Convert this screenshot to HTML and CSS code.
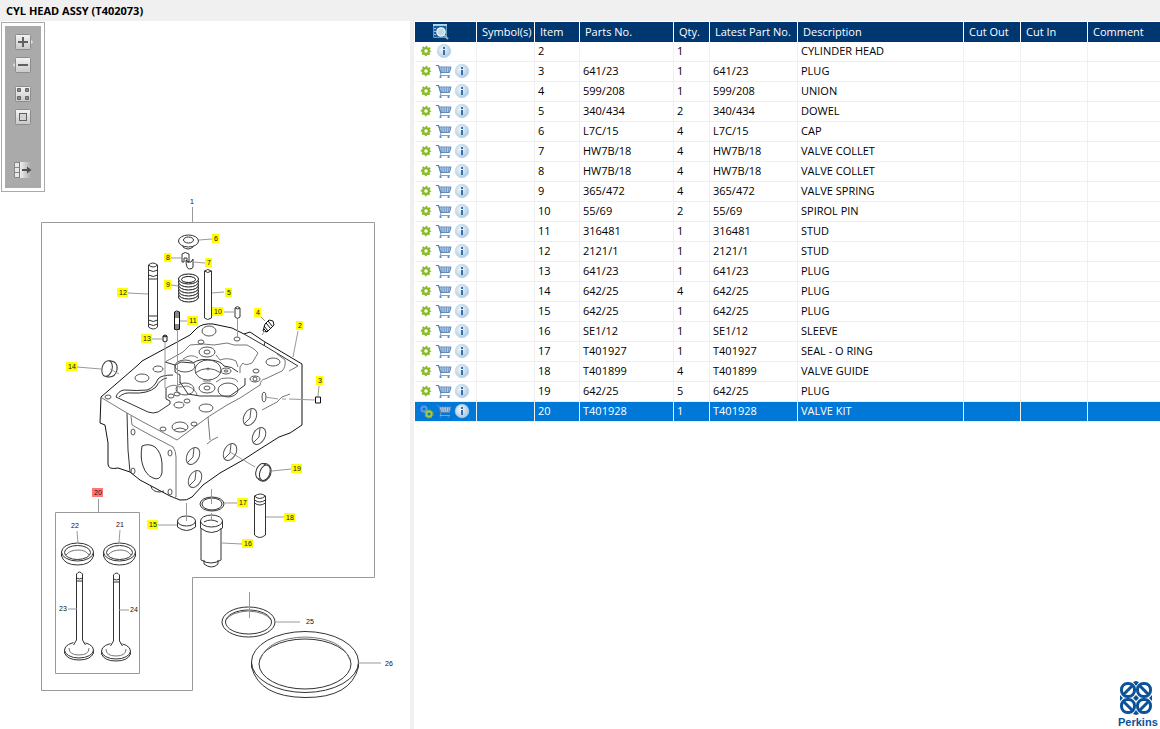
FILE: index.html
```
<!DOCTYPE html>
<html lang="en">

<head>
    <meta charset="utf-8">
    <meta name="viewport" content="width=device-width, initial-scale=1.0">
    <title>CYL HEAD ASSY (T402073)</title>
    <link rel="stylesheet" href="styles.css">
</head>

<body>
    <!-- shared icons -->
    <svg class="sprite" aria-hidden="true">
        <defs>
            <linearGradient id="metal" x1="0" y1="0" x2="0" y2="1">
                <stop offset="0" stop-color="#f4f4f4"/>
                <stop offset="1" stop-color="#c8c8c8"/>
            </linearGradient>
            <linearGradient id="fade">
                <stop offset="0" stop-color="#eee"/>
                <stop offset="1" stop-color="#aaa"/>
            </linearGradient>
            <radialGradient id="glass" cx=".4" cy=".4" r=".6">
                <stop offset="0" stop-color="#f2f8fc"/>
                <stop offset="1" stop-color="#accbe4"/>
            </radialGradient>
        </defs>
        <symbol id="gear" viewBox="0 0 16 16">
            <circle cx="8" cy="8" r="2.9" fill="none" stroke="#8abb2a" stroke-width="2.4"/>
            <circle cx="8" cy="8" r="4.4" fill="none" stroke="#8abb2a" stroke-width="1.6" stroke-dasharray="1.9 1.55" stroke-dashoffset=".95"/>
        </symbol>
        <symbol id="gears" viewBox="0 0 16 16">
            <circle cx="6" cy="6" r="2.6" fill="none" stroke="#5a9cf0" stroke-width="2"/>
            <circle cx="6" cy="6" r="4.1" fill="none" stroke="#3f6fd8" stroke-width="1.4" stroke-dasharray="1.7 1.52"/>
            <circle cx="11" cy="11" r="2.6" fill="none" stroke="#a8c83a" stroke-width="2.2"/>
            <circle cx="11" cy="11" r="4" fill="none" stroke="#8fae3a" stroke-width="1.2" stroke-dasharray="1.6 1.54"/>
        </symbol>
        <symbol id="cart" viewBox="0 0 16 16">
            <path d="M0 2.5h2.5l2.5 8" fill="none" stroke="#4f7fb8" stroke-width="1.2"/>
            <path d="M3 4h12l-1.500 5.500H5z" fill="#d6e2f0" stroke="#4f7fb8" stroke-width=".9"/>
            <path d="M5.500 4l.7 5.500M8 4l.3 5.500M10.500 4l-.2 5.500M13 4l-.7 5.500M3.500 6h11M4.200 8h9.500" stroke="#4f7fb8" stroke-width=".6"/>
            <path d="M5 10.500l-1 2h10" fill="none" stroke="#7ea3ce"/>
            <circle cx="4.500" cy="14" r="1.1" fill="#4f7fb8"/>
            <circle cx="12.500" cy="14" r="1.1" fill="#4f7fb8"/>
        </symbol>
        <symbol id="info" viewBox="0 0 16 16">
            <circle cx="8" cy="8" r="6.800" fill="url(#glass)" stroke="#bcd5ea" stroke-width=".6"/>
            <path d="M7 4h2v2h-2zM7 7h2v5h-2z" fill="#3a6ea5"/>
        </symbol>
        <symbol id="search" viewBox="0 0 16 16">
            <path d="M.5 .5h13v13H.5z" fill="#17609f" stroke="#5b9bc8"/>
            <path d="M0 1h14M2 4v1M2 7v1M2 10v1" stroke="#d6ebf7" stroke-width="1.4"/>
            <path d="M11 11l4 4" stroke="#8daec4" stroke-width="2"/>
            <circle cx="8" cy="8" r="4.2" fill="#c3d7e3" stroke="#eef5fa" stroke-width="1.2"/>
        </symbol>
    </svg>

    <h1 class="title">CYL HEAD ASSY (T402073)</h1>

    <main class="split">
        <section class="drawing">
            <div class="tools">
                <button type="button" aria-label="Zoom in">
                    <svg viewBox="0 0 20 16">
                        <path d="M17 5.5l2.500 2.500-2.500 2.500" fill="#ddd" stroke="#e8e8e8"/>
                        <rect x="2.500" y=".5" width="15" height="15" rx="1" fill="url(#metal)" stroke="#8c8c8c"/>
                        <path d="M10 3v10M5 8h10" stroke="#606060" stroke-width="2"/>
                    </svg>
                </button>
                <button type="button" aria-label="Zoom out">
                    <svg viewBox="0 0 20 16">
                        <path d="M3 5.500L.5 8l2.500 2.500" fill="#ddd" stroke="#e8e8e8"/>
                        <rect x="2.500" y=".5" width="15" height="15" rx="1" fill="url(#metal)" stroke="#8c8c8c"/>
                        <path d="M5 8h10" stroke="#606060" stroke-width="2"/>
                    </svg>
                </button>
                <button type="button" class="group" aria-label="Fit to window">
                    <svg viewBox="0 0 20 16">
                        <rect x="2.500" y=".5" width="15" height="15" rx="1" fill="url(#metal)" stroke="#8c8c8c"/>
                        <path d="M4.500 2.500h3v3h-3zM12.500 2.500h3v3h-3zM4.500 10.500h3v3h-3zM12.500 10.500h3v3h-3z" fill="#888" stroke="#666"/>
                    </svg>
                </button>
                <button type="button" aria-label="Actual size">
                    <svg viewBox="0 0 20 16">
                        <rect x="2.500" y=".5" width="15" height="15" rx="1" fill="url(#metal)" stroke="#8c8c8c"/>
                        <rect x="6.500" y="4.500" width="7" height="7" fill="#d4d4d4" stroke="#606060"/>
                    </svg>
                </button>
                <button type="button" class="last" aria-label="Hide list">
                    <svg viewBox="0 0 20 16">
                        <path d="M1.500 .5h5v15h-5z" fill="#e8e8e8" stroke="#888"/>
                        <path d="M1 5.500h5M1 10.500h5" stroke="#888"/>
                        <path d="M7 0h11v16H7z" fill="url(#fade)"/>
                        <path d="M6.500 0v16" stroke="#777"/>
                        <path d="M9 8h7" stroke="#505050" stroke-width="2"/>
                        <path d="M14 4.500L18.500 8 14 11.500z" fill="#505050"/>
                    </svg>
                </button>
            </div>

            <svg class="plate" viewBox="0 21 410 708" role="img" aria-label="Cylinder head exploded view">
                <!-- frames -->
                <g class="frame">
                    <path d="M192.500 207v15.500M41.500 222.500h333v355h-182v113h-151z"/>
                    <path d="M98.500 499v13.500M55.500 512.500h84v161h-84z"/>
                </g>

                <!-- head casting -->
                <g class="line">
                    <path class="edge" d="M101 397L138 365 142 361 155 354 190 335 197 328Q203 323 213 324L232 328 244 334 250 332 265 342 302 364V425L290 433 279 437 260 449 243 460 220 473 203 485 192 497Q187 501 180 500L170 496 140 480 130 472 118 468Q108 470 108 464V443L105 425 100 423Z"/>
                    <path d="M244 334L265 346 298 366M265 342l-1 4M127 413L128 450 130 472M151 486q1 6 9 6l4-1"/>
                    <path d="M116 397Q118 391 124 390 138 391 147 390 154 388 158 379 161 375 173 375"/>
                    <path d="M116 397L148 412Q153 414 158 412L170 404V401L166 399V388M119 397Q124 392 132 393 148 394 156 387 160 379 167 378"/>
                    <path d="M175 365L181 362 193 363Q200 358 211 360 221 361 224 366 232 366 238 372M180 382L188 394 200 396 230 396 241 388 245 385 245 378M165 362l10 3v7l5 3v8"/>
                    <path d="M142 446Q149 443 155 447 161 452 162 463V473Q160 481 153 478 146 475 143 466 140 458 142 446Z"/>
                </g>
                <g class="thin">
                    <path d="M102 398L127 413 143 422 177 440 208 417 227 405 240 398 260 385Q261 379 265 379L282 371Q286 367 285 360L277 354"/>
                    <path d="M131 416L132 425 150 435 173 447Q176 451 176 457V497l-3 1M208 417l2 23M207 444l5-4 6-3M298 366l-9 5"/>
                    <path d="M165 362L183 352 190 345 203 344 214 345 227 343 234 345 247 345 254 349 258 353 252 363Q245 366 243 363L240 367v6"/>
                    <path d="M262 410L277 402 282 397 290 394M166 388q8-5 13-1l9-1q8 4 9 9M183 359q8-6 15-1M216 355l4 5q8-3 16 1l2 6M216 382q5-5 12-4 8 0 10 4M211 381h-8"/>
                    <circle cx="208" cy="369" r="1"/>
                </g>
                <g class="line hole">
                    <ellipse cx="142" cy="378" rx="7" ry="4"/>
                    <ellipse cx="209" cy="331" rx="7" ry="5"/>
                    <ellipse cx="273" cy="362" rx="7" ry="4"/>
                    <ellipse cx="206" cy="408" rx="7" ry="4"/>
                    <ellipse cx="208" cy="370" rx="13" ry="10"/>
                    <ellipse cx="158" cy="369" rx="5" ry="3"/>
                    <ellipse cx="108" cy="397" rx="3" ry="2"/>
                    <ellipse cx="201" cy="342" rx="3" ry="2"/>
                    <ellipse cx="237" cy="339" rx="3" ry="2"/>
                    <ellipse cx="207" cy="352" rx="8" ry="5"/>
                    <ellipse cx="207" cy="352" rx="3" ry="2"/>
                    <ellipse cx="207" cy="388" rx="8" ry="5"/>
                    <ellipse cx="207" cy="388" rx="3" ry="2"/>
                    <ellipse cx="185" cy="389" rx="9" ry="6"/>
                    <ellipse cx="228" cy="390" rx="10" ry="7"/>
                    <ellipse cx="185" cy="366" rx="10" ry="6"/>
                    <ellipse cx="226" cy="371" rx="5" ry="3"/>
                    <ellipse cx="226" cy="371" rx="2" ry="1"/>
                    <ellipse cx="256" cy="371" rx="3" ry="2"/>
                    <ellipse cx="255" cy="379" rx="5" ry="3"/>
                    <ellipse cx="255" cy="379" rx="2" ry="2"/>
                    <ellipse cx="179" cy="405" rx="5" ry="3"/>
                    <ellipse cx="187" cy="401" rx="3" ry="2"/>
                    <ellipse cx="171" cy="396" rx="3" ry="2"/>
                    <ellipse cx="177" cy="394" rx="3" ry="2"/>
                    <ellipse cx="163" cy="429" rx="3" ry="2"/>
                    <ellipse cx="194" cy="424" rx="3" ry="2"/>
                    <ellipse cx="180" cy="427" rx="8" ry="5"/>
                    <path d="M174 430q6-4 12 0M195 373q13-9 26 0"/>
                    <ellipse cx="133" cy="432" rx="2" ry="3"/>
                    <ellipse cx="170" cy="453" rx="2" ry="3"/>
                    <ellipse cx="133" cy="471" rx="2" ry="3"/>
                    <ellipse cx="170" cy="492" rx="2" ry="3"/>
                    <ellipse cx="264" cy="397" rx="2" ry="5"/>
                    <g id="port">
                        <ellipse cx="193" cy="456" rx="6" ry="9" transform="rotate(28 193 456)"/>
                        <path d="M194 448l-1 9-6 6"/>
                    </g>
                    <use href="#port" x="2" y="23"/>
                    <use href="#port" x="57" y="-39"/>
                    <use href="#port" x="66" y="-20"/>
                    <use href="#port" x="37" y="-4"/>
                </g>

                <!-- loose parts -->
                <g class="line solid">
                    <path d="M183 245v2q5 4 10 0v-2"/>
                    <ellipse cx="188.500" cy="241" rx="10" ry="6"/>
                    <ellipse cx="188.500" cy="240" rx="5" ry="3"/>
                    <path d="M182 262v-8q3-3 7 0v8h-2v-4h-3v4zM186 260q0 8 3 9 4 0 4-2v-8l-2 3h-3z"/>
                    <path d="M148.500 265v62q5 4 9 0v-62q-5-4-9 0q5 4 9 0M148.500 270q5 3 9 0M148.500 275q5 3 9 0M148.500 279h9M148.500 316h9M148.500 320q5 3 9 0M148.500 324q5 3 9 0"/>
                    <path d="M204.500 271v47q3 3 7 0v-47q-4-3-7 0q3 3 7 0"/>
                    <path d="M235 308v9q2 3 5 0v-9q-3-3-5 0q3 2 5 0"/>
                    <path d="M174.500 312v17q2 2 5 0v-17q-3-2-5 0M174 313h6M174 315h6M174 317h6M174 325h6M174 327h6M174 329h6" class="edge"/>
                    <path d="M163 336v5q2 2 4 0v-5q-2-2-4 0q2 2 4 0" class="edge"/>
                    <path d="M315.500 397h5v6h-5z" class="edge"/>
                    <path d="M263 331l2-7 4-4 4 1 1 4-4 4-3 3zM266 323l5 6M268 321l5 6M264 326l4 5M264 329l3 3" class="edge"/>
                    <g transform="rotate(15 109 369)">
                        <path d="M107 361q9-2 10 7 0 9-9 9"/>
                        <ellipse cx="107" cy="369" rx="5" ry="8"/>
                    </g>
                    <g transform="rotate(20 263 472)">
                        <ellipse cx="264" cy="472" rx="7" ry="9"/>
                        <ellipse cx="261" cy="472" rx="5" ry="8"/>
                        <ellipse cx="265" cy="472" rx="5" ry="8"/>
                    </g>
                    <path d="M177.500 521v6q9 7 18 0v-6"/>
                    <ellipse cx="186.500" cy="521" rx="9" ry="5"/>
                    <path d="M254.500 496v39q5 5 11 0v-39q-5-4-11 0q5 5 11 0M254.500 500q5 4 11 0M254.500 503q5 4 11 0"/>
                    <ellipse cx="212" cy="504" rx="12" ry="7"/>
                    <ellipse cx="212" cy="504" rx="10" ry="6"/>
                    <path d="M204 560v4q8 6 14 0v-4M201 528v32q10 6 20 0v-32M200.500 521v7q11 9 22 0v-7M204 522q7-4 14 0"/>
                    <ellipse class="open" cx="211.500" cy="521" rx="11" ry="6"/>
                </g>

                <!-- spring, drawn from the lowest coil up -->
                <g class="line solid edge">
                    <ellipse id="coil" cx="188.500" cy="297" rx="10" ry="5"/>
                    <use href="#coil" y="-3"/>
                    <use href="#coil" y="-6"/>
                    <use href="#coil" y="-9"/>
                    <use href="#coil" y="-12"/>
                    <use href="#coil" y="-15"/>
                    <use href="#coil" y="-18"/>
                    <ellipse cx="188.500" cy="279.500" rx="7" ry="3"/>
                </g>

                <!-- valve kit -->
                <g class="line solid">
                    <g id="ring">
                        <path d="M61.500 552v4q3 9 16 9t16-9v-4"/>
                        <ellipse cx="77.500" cy="552" rx="16" ry="9"/>
                        <ellipse cx="77.500" cy="552.500" rx="13" ry="7"/>
                        <path d="M66 555q4-5 12-5t11 5" class="thin"/>
                    </g>
                    <use href="#ring" x="42"/>
                    <g id="valve">
                        <path d="M64.500 650v3q3 7 14.500 7t14.500-7v-3"/>
                        <ellipse cx="79" cy="650" rx="14.500" ry="8"/>
                        <path d="M69 648q0 7 10 7t10-7" class="thin"/>
                        <path class="stem" d="M74 644l3-6V574q2-3 5 0v64l2 6q-5 3-10 0z"/>
                        <path d="M76.500 574v66l-3 5M82.500 574v66l3 5M76.500 574q3-4 6 0v4q-3 2-6 0zM76.500 581h6"/>
                    </g>
                    <use href="#valve" x="37" y="1"/>
                </g>

                <!-- gaskets -->
                <g class="line">
                    <ellipse cx="248.500" cy="622" rx="26.500" ry="15"/>
                    <ellipse cx="248.500" cy="622" rx="23" ry="12"/>
                    <ellipse cx="305" cy="662" rx="53.500" ry="30.500"/>
                    <ellipse cx="305" cy="664" rx="46" ry="25"/>
                    <path d="M251.500 662v5q8 30 53.500 30.500t53.500-30.500v-5"/>
                    <path d="M260 660q8-22 45-23 37 1 45 23M226 620q5-8 22-9 18 1 23 9" class="thin"/>
                </g>

                <!-- leaders -->
                <g class="lead">
                    <path d="M199 240l13-1M171 258h10M193 262l12 1M171 285l7 1M212 293l12-1M224 312h10M261 317l4 4M265 331l-3 4M128 293l20 1M180 321h8M152 339h10M165 343v45M177.500 331v61M237.500 319v18M298 331l-5 26M319 386l-1 10M315 400l-26-1M286 399h-4M278 399l-13-2M77 367l24 2M110 369l9 5M230 452l25 15M272 471l19-2M186.500 503v18M158 525h19M211.500 489v15M224 503h14M211.500 513v8M266 517h19M222 543l20 1M77 531l1 12M120 530l-1 12M68 609h9M119 610h10M249.500 592v26M275 622h25M358 663h23"/>
                </g>

                <g id="labels"></g>
            </svg>
        </section>

        <section class="parts">
            <table>
                <colgroup>
                    <col class="c-icons">
                    <col class="c-symbol">
                    <col class="c-item">
                    <col class="c-part">
                    <col class="c-qty">
                    <col class="c-latest">
                    <col class="c-desc">
                    <col class="c-out">
                    <col class="c-in">
                    <col>
                </colgroup>
                <thead>
                    <tr>
                        <th class="find"><button type="button" aria-label="Search"><svg><use href="#search"/></svg></button></th>
                        <th>Symbol(s)</th>
                        <th>Item</th>
                        <th>Parts No.</th>
                        <th>Qty.</th>
                        <th>Latest Part No.</th>
                        <th>Description</th>
                        <th>Cut Out</th>
                        <th>Cut In</th>
                        <th>Comment</th>
                    </tr>
                </thead>
                <tbody id="rows"></tbody>
            </table>

            <a class="logo" href="#" aria-label="Perkins">
                <svg viewBox="0 0 40 48">
                    <g fill="none" stroke="#0b5299" stroke-width="3">
                        <rect x="3.500" y="2.500" width="13" height="13" rx="6"/>
                        <rect x="19.500" y="2.500" width="13" height="13" rx="6"/>
                        <rect x="3.500" y="18.500" width="13" height="13" rx="6"/>
                        <rect x="19.500" y="18.500" width="13" height="13" rx="6"/>
                        <path d="M5 14L15 4M31 14L21 4M5 20l10 10M31 20L21 30"/>
                    </g>
                    <path d="M15 1l3-1 3 1-3 4zM15 33l3 1 3-1-3-4zM2 14l3 3-3 3zM34 14l-3 3 3 3zM15 17l3-3 3 3-3 3z" fill="#0b5299"/>
                    <text x="0" y="45">Perkins</text>
                </svg>
            </a>
        </section>
    </main>

    <script>
        // item, part no., qty, description
        const parts = [
            [2, "", 1, "CYLINDER HEAD"],
            [3, "641/23", 1, "PLUG"],
            [4, "599/208", 1, "UNION"],
            [5, "340/434", 2, "DOWEL"],
            [6, "L7C/15", 4, "CAP"],
            [7, "HW7B/18", 4, "VALVE COLLET"],
            [8, "HW7B/18", 4, "VALVE COLLET"],
            [9, "365/472", 4, "VALVE SPRING"],
            [10, "55/69", 2, "SPIROL PIN"],
            [11, "316481", 1, "STUD"],
            [12, "2121/1", 1, "STUD"],
            [13, "641/23", 1, "PLUG"],
            [14, "642/25", 4, "PLUG"],
            [15, "642/25", 1, "PLUG"],
            [16, "SE1/12", 1, "SLEEVE"],
            [17, "T401927", 1, "SEAL - O RING"],
            [18, "T401899", 4, "VALVE GUIDE"],
            [19, "642/25", 5, "PLUG"],
            [20, "T401928", 1, "VALVE KIT"]
        ];
        const selected = 20;

        const icon = (name, label) =>
            `<button type="button" aria-label="${label}"><svg><use href="#${name}"/></svg></button>`;

        document.getElementById("rows").innerHTML = parts.map(([item, no, qty, text]) => `
            <tr class="${item === selected ? "selected" : ""}">
                <td class="icons">${icon(item === selected ? "gears" : "gear", "Part")}${no ? icon("cart", "Add to cart") : ""}${icon("info", "Info")}</td>
                <td></td><td>${item}</td><td>${no}</td><td>${qty}</td><td>${no}</td><td>${text}</td>
                <td></td><td></td><td></td>
            </tr>`).join("");

        // number, centre x, centre y
        const labels = [
            [1, 192, 202], [2, 300, 326], [3, 320, 381], [4, 258, 313], [5, 229, 293],
            [6, 216, 239], [7, 209, 263], [8, 168, 258], [9, 168, 285], [10, 218, 312],
            [11, 193, 321], [12, 123, 293], [13, 147, 339], [14, 72, 367], [15, 153, 525],
            [16, 248, 544], [17, 243, 503], [18, 290, 518], [19, 297, 469], [20, 98, 493],
            [21, 120, 525], [22, 75, 526], [23, 63, 609], [24, 134, 610], [25, 310, 622], [26, 389, 664]
        ];

        document.getElementById("labels").innerHTML = labels.map(([n, x, y]) => {
            const w = n < 10 ? 7 : 11;
            const mark = n > 1 && n <= 20
                ? `<rect class="mark${n === selected ? " picked" : ""}" x="${x - (w + 1) / 2}" y="${y - 5}" width="${w}" height="9"/>` : "";
            return `${mark}<text x="${x}" y="${y + 2}">${n}</text>`;
        }).join("");
    </script>
</body>

</html>
```
FILE: styles.css
```
* {
    box-sizing: border-box;
}

body {
    background: #f0f0f0;
    color: #000;
    display: flex;
    flex-direction: column;
    font-family: "Open Sans", "Noto Sans", sans-serif;
    font-size: 11px;
    margin: 0;
    min-height: 100vh;
}

button {
    background: none;
    border: 0;
    cursor: pointer;
    display: block;
    padding: 0;
}

svg {
    display: block;
}

.sprite {
    height: 0;
    position: absolute;
    width: 0;
}

.title {
    font-size: 11px;
    line-height: 21px;
    margin: 0;
    padding: 0 6px;
}

.split {
    display: grid;
    flex: 1;
    gap: 4px;
    grid-template-columns: 410px 1fr;
}

/* drawing */

.drawing {
    background: #fff;
    position: relative;
}

.tools {
    background: #aaa;
    border: 1px solid #aaa;
    box-shadow: inset 0 0 0 3px #fff;
    display: flex;
    flex-direction: column;
    gap: 7px;
    left: 1px;
    padding: 11px;
    position: absolute;
    top: 1px;
    width: 44px;
}

.tools svg {
    height: 16px;
    width: 20px;
}

.tools .group {
    margin-top: 6px;
}

.tools .last {
    margin-bottom: 2px;
    margin-top: 30px;
}

.plate {
    width: 100%;
}

.plate text {
    fill: #111;
    font-family: "Liberation Sans", sans-serif;
    font-size: 7px;
    text-anchor: middle;
}

.frame {
    fill: none;
    stroke: #999;
}

.line {
    fill: none;
    stroke: #333;
}

.solid {
    fill: #fff;
}

.edge {
    stroke: #111;
}

.open,
.thin {
    fill: none;
}

.thin {
    stroke: #777;
}

.hole {
    stroke: #555;
}

.stem {
    stroke: none;
}

.lead {
    fill: none;
    stroke: #999;
}

.mark {
    fill: #ff0;
}

.picked {
    fill: #f77;
}

/* parts list */

.parts {
    background: #fff;
    display: flex;
    flex-direction: column;
    justify-content: space-between;
    padding: 1px 0 0 1px;
}

table {
    border-collapse: separate;
    border-spacing: 0;
    table-layout: fixed;
    width: 100%;
}

.c-icons { width: 62px; }
.c-symbol { width: 58px; }
.c-item { width: 45px; }
.c-part { width: 94px; }
.c-qty { width: 36px; }
.c-latest { width: 88px; }
.c-desc { width: 166px; }
.c-out { width: 57px; }
.c-in { width: 67px; }

th,
td {
    border-right: 1px solid #f0f0f0;
    height: 20px;
    line-height: 18px;
    overflow: hidden;
    padding: 0 3px;
    text-align: left;
    white-space: nowrap;
}

th {
    background: #003771;
    border-color: #fff;
    color: #fff;
    font-weight: normal;
    padding: 0 0 0 5px;
}

td {
    border-bottom: 1px solid #f0f0f0;
    vertical-align: top;
}

th:last-child,
td:last-child {
    border-right: 0;
}

th svg,
td svg {
    height: 16px;
    width: 16px;
}

.find {
    padding-left: 18px;
}

.icons button {
    float: left;
    margin: 1px 2px 0 0;
}

.selected td {
    background: #0078d7;
    color: #fff;
}

.logo {
    align-self: flex-end;
    margin-right: 2px;
}

.logo svg {
    height: 48px;
    width: 40px;
}

.logo text {
    fill: #0b5299;
    font: bold 11px "Liberation Sans", sans-serif;
}
```
